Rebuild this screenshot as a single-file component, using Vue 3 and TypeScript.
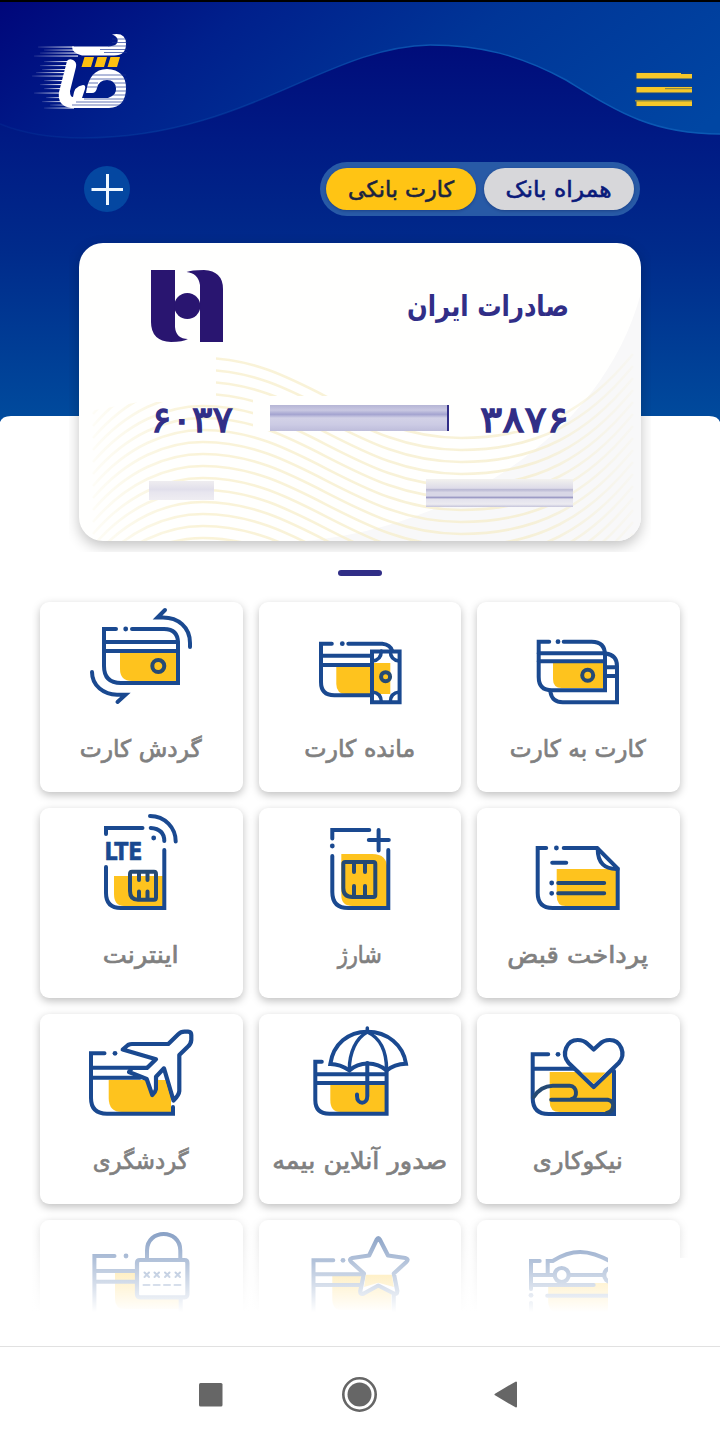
<script setup lang="ts">
type Shape = [kind: string, d: string]
interface Tile {
  id: string
  label: string
  width: number
  x: number
  y: number
  lte?: boolean
  shapes: Shape[]
}

const tiles: Tile[] = [
  {
    id: 'turnover', label: 'گردش کارت', width: 122, x: 40, y: 602,
    shapes: [
      ['gold', 'M120 653H177V681H132Q120 681 120 669Z'],
      ['line', 'M116 629H104V666Q104 683 121 683H178V643Q178 629 164 629H132'],
      ['dot', 'M125.7 629h0'],
      ['line', 'M104 642H178M104 651H178'],
      ['dark', 'M164.300 666a6 6 0 1 0-12 0a6 6 0 1 0 12 0'],
      ['line', 'M190 647V643C190 627 178 617.500 163 617.500H157.500L165 610'],
      ['line', 'M92 672C92 686 104 694.500 117 694.700H125.500L117.500 702'],
    ],
  },
  {
    id: 'balance', label: 'مانده کارت', width: 111, x: 258.7, y: 602,
    shapes: [
      ['gold', 'M336 667H371V663H390V694H346Q336 694 336 684Z'],
      ['line', 'M331.500 643.700H320.700V682Q320.700 695.300 334 695.300H371'],
      ['line', 'M348 643.700H382Q390 644.500 392 651'],
      ['dot', 'M342 643.700h0'],
      ['line', 'M320.700 655.700H371M320.700 665H371'],
      ['line', 'M371.700 651.500H399.300V702.300H371.700Z'],
      ['thin', 'M381 651Q381 660 372 661M390 651Q390 660 399 661M381 702Q381 693 372 692M390 702Q390 693 399 692'],
      ['dark', 'M389.800 676.700a4.500 4.500 0 1 0-9 0a4.500 4.500 0 1 0 9 0'],
    ],
  },
  {
    id: 'transfer', label: 'کارت به کارت', width: 136, x: 477.3, y: 602,
    shapes: [
      ['gold', 'M553.300 663H604V688H562Q553.300 688 553.300 679Z'],
      ['line', 'M549.500 641.700H539V677Q539 690.300 552 690.300H605.300V655Q605.300 641.700 592 641.700H564'],
      ['dot', 'M558.300 641.700h0'],
      ['line', 'M539 653.300H605M539 661.300H605'],
      ['dark', 'M593.500 675.300a5.500 5.500 0 1 0-11 0a5.500 5.500 0 1 0 11 0'],
      ['line', 'M606 653.500Q617.300 655 617.300 666V702.300H563Q552.500 702.300 550.700 692M606 667.300H617M606 676H617'],
    ],
  },
  {
    id: 'internet', label: 'اینترنت', width: 76, x: 40, y: 808, lte: true,
    shapes: [
      ['gold', 'M114 876H163V906H124Q114 906 114 894Z'],
      ['line', 'M106 834V828H142.500M106 867V893Q106 908 121 908H164.300V850'],
      ['line', 'M150.700 828Q164.300 829 164.300 841M150 816C165 816 175.700 828 175.700 841.500'],
      ['dot', 'M153.700 838h0'],
      ['dark', 'M132 871.700H154Q156 871.700 156 874V897.500Q156 899.700 154 899.700H138Q130 899.700 130 891V874Q130 871.700 132 871.700Z'],
      ['dark', 'M139 872V880M147.500 872V880M139 891.500V899M147.500 891.500V899'],
    ],
  },
  {
    id: 'charge', label: 'شارژ', width: 44, x: 258.7, y: 808,
    shapes: [
      ['gold', 'M341 854H372Q387 854 387 869V906H352Q341 906 341 895Z'],
      ['line', 'M332 838.500V830H369M332 856V892Q332 908 348 908H388V850'],
      ['dot', 'M332 846h0'],
      ['line', 'M368.500 840H388.500M378.300 830V850.500'],
      ['dark', 'M345 862H373Q375 862 375 864V895Q375 897 373 897H352Q343 897 343 888V864Q343 862 345 862Z'],
      ['dark', 'M353.700 863V872M364.700 863V872M353.700 886V896M364.700 886V896'],
    ],
  },
  {
    id: 'bill', label: 'پرداخت قبض', width: 141, x: 477.3, y: 808,
    shapes: [
      ['gold', 'M557 869H617V906H566Q557 906 557 896Z'],
      ['line', 'M546.500 848H538V893Q538 908 553 908H618V868.500L597.500 848H564'],
      ['line', 'M598 849C598 863 605 869.500 618 869'],
      ['dot', 'M556.700 848h0M552 883h0M552 893.300h0'],
      ['line', 'M552.500 862.700H566.500'],
      ['dark', 'M558.500 883H604.500M558.500 893.300H604.500'],
    ],
  },
  {
    id: 'travel', label: 'گردشگری', width: 96, x: 40, y: 1014,
    shapes: [
      ['gold', 'M108.700 1080H171V1112H122Q108.700 1112 108.700 1098Z'],
      ['line', 'M104.500 1053.300H91V1098Q91 1113.700 107 1113.700H173V1107M91 1067.700H147M91 1077.700H140'],
      ['dot', 'M115 1053.300h0'],
      ['paper', 'M168.300 1044L178 1034.500Q181 1031.500 185 1031.700H188Q191.300 1032 191.300 1035V1040Q191 1044 187.500 1047L179.300 1055V1091Q179 1095 173.500 1100.500L164 1068.300L156 1076.700V1089Q155.500 1092 152.300 1095L146.700 1079L129 1072L132 1068H147L156 1059.300L122.700 1049.500L128 1045Q130 1044 132 1044Z'],
      ['goldfill', 'M158 1080H165L171 1101L170 1104H158Z'],
    ],
  },
  {
    id: 'insurance', label: 'صدور آنلاین بیمه', width: 175, x: 258.7, y: 1014,
    shapes: [
      ['gold', 'M330 1085H385V1112H340Q330 1112 330 1100Z'],
      ['line', 'M321.500 1061.700H315V1100Q315 1113.700 329 1113.700H386.300V1070M315 1074.300H386M315 1083H386'],
      ['line', 'M330 1064C333 1044 348 1031.700 367 1031.700C387 1031.700 403 1045 405.700 1063.700Q394 1064 386.300 1070.500C376 1061 359 1061 349 1070.500Q340 1064 330 1064Z'],
      ['thin', 'M349 1070C349 1052 356 1038 367 1032C380 1038 386.300 1052 386.300 1070M367 1028V1032'],
      ['line', 'M367 1063V1096C367 1105 356.700 1105 356.700 1096V1094.500'],
    ],
  },
  {
    id: 'charity', label: 'نیکوکاری', width: 90, x: 477.3, y: 1014,
    shapes: [
      ['gold', 'M550 1072H613V1112H560Q550 1112 550 1102Z'],
      ['line', 'M548.500 1054.300H533V1098Q533 1114 549 1114H614.300V1071M533 1068.700H574'],
      ['dot', 'M558.300 1054.300h0'],
      ['goldpaper', 'M594 1087L569 1063C561 1054 567 1040 578 1040Q584 1040 588 1044L594 1049.500L600 1044Q604 1040 610 1040C621 1040 627 1054 619 1063Z'],
      ['goldfill', 'M582 1072.500H606L594 1084Z'],
      ['dark', 'M534 1097Q541 1086 553 1085.700H570C578 1086 578 1098 572 1099'],
      ['dark', 'M551.500 1099.700H608Q614 1101 613.500 1106Q613 1112 607 1113'],
    ],
  },
  {
    id: 'password', label: '', width: 0, x: 40, y: 1220,
    shapes: [
      ['gold', 'M115 1272.700H179V1309H125Q115 1309 115 1299Z'],
      ['line', 'M114.500 1256H94.400V1315M94.400 1271H136M94.400 1281.700H136M180.700 1299V1315'],
      ['dot', 'M126 1256h0'],
      ['line', 'M147 1259V1250.500C147 1228.500 180.300 1228.500 180.300 1250.500V1259'],
      ['paper', 'M140 1260H184.400Q187.400 1260 187.400 1263V1294.300Q187.400 1297.300 184.400 1297.300H140Q137 1297.300 137 1294.300V1263Q137 1260 140 1260Z'],
      ['fine', 'M144.500 1272.500l4.500 4.500m0-4.500l-4.500 4.500M154.500 1272.500l4.500 4.500m0-4.500l-4.500 4.500M165 1272.500l4.500 4.500m0-4.500l-4.500 4.500M175.500 1272.500l4.500 4.500m0-4.500l-4.500 4.500'],
      ['fine', 'M143.500 1285h6M153.700 1285h6M164 1285h6M174.500 1285h6'],
    ],
  },
  {
    id: 'favorite', label: '', width: 0, x: 258.7, y: 1220,
    shapes: [
      ['gold', 'M332 1274.700H391V1310H342Q332 1310 332 1300Z'],
      ['line', 'M333 1260.300H313.200V1315M313.200 1274.300H362M313.200 1285H362M393.500 1293V1315'],
      ['dot', 'M342.700 1260.300h0'],
      ['goldpaper', 'M376.500 1239.500Q378 1236.500 379.500 1239.500L387.700 1255.500L405 1258Q409 1259 406 1262L393.500 1273.500L397 1291Q397 1295 393.500 1293.500L378 1285.500L363.500 1293.500Q359.500 1295 360 1291L363.700 1273.500L351 1262Q348 1259 352 1258L368.800 1255.500Z'],
      ['goldfill', 'M365.500 1274.700H391.500L393.500 1287L378 1282.800L363.800 1287Z'],
    ],
  },
  {
    id: 'vehicle', label: '', width: 0, x: 477.3, y: 1220,
    shapes: [
      ['gold', 'M548.500 1287H594V1283H615V1315H558Q548.500 1310 548.500 1302Z'],
      ['line', 'M540 1261H531.300V1289M531.300 1303V1315M531.300 1275H554M570 1275H603M531.300 1285H594M547.500 1295.700H610'],
      ['dot', 'M531.300 1295.300h0'],
      ['line', 'M548 1274V1261H553Q567 1252 580.500 1252Q594 1252 612 1262'],
      ['paper', 'M569 1275a7 7 0 1 0-14 0a7 7 0 1 0 14 0M618.500 1275a7 7 0 1 0-14 0a7 7 0 1 0 14 0'],
    ],
  },
]

const waves: string[] = Array.from({ length: 18 }, (_, i) => {
  const p = 115 + i * 12
  return `M14 ${p + 56}C48 ${p + 16} 88 ${p} 124 ${p}C222 ${p} 276 ${p + 80} 382 ${p + 80}C460 ${p + 80} 510 ${p + 50} 554 ${p - 4}`
})

const speedLines = [
  [38, 46.5, 36], [44, 49.500, 32], [40, 52.500, 38], [34, 55.500, 44], [44, 61, 24], [40, 65, 28], [42, 69, 24],
  [36, 72, 28], [32, 75.500, 32], [44, 80, 18], [40, 84, 22], [44, 88, 18], [34, 92.500, 28], [46, 97, 18],
  [42, 101, 24], [50, 104.500, 24], [44, 107.500, 30],
]
</script>

<template>
  <div class="screen">
    <svg class="backdrop" width="720" height="424" viewBox="0 0 720 424" aria-hidden="true">
      <defs>
        <linearGradient id="base" x1="0" y1="0" x2="0" y2="1">
          <stop offset="0.1" stop-color="#000c7a" />
          <stop offset="0.33" stop-color="#001a84" />
          <stop offset="0.6" stop-color="#002b8b" />
          <stop offset="1" stop-color="#004b9d" />
        </linearGradient>
        <linearGradient id="swell" gradientUnits="userSpaceOnUse" x1="0" y1="0" x2="330" y2="420">
          <stop offset="0" stop-color="#00067a" />
          <stop offset="0.3" stop-color="#00208c" />
          <stop offset="0.6" stop-color="#003597" />
          <stop offset="1" stop-color="#0046a3" />
        </linearGradient>
        <linearGradient id="edge" gradientUnits="userSpaceOnUse" x1="0" y1="0" x2="720" y2="0">
          <stop offset="0" stop-color="#0b54b0" stop-opacity="0.15" />
          <stop offset="0.35" stop-color="#0b54b0" stop-opacity="0.4" />
          <stop offset="0.6" stop-color="#0b54b0" />
          <stop offset="1" stop-color="#0b5ab4" />
        </linearGradient>
      </defs>
      <path fill="url(#base)" d="M0 0H720V422Q718 416 709 416H11Q2 416 0 422Z" />
      <path fill="url(#swell)" d="M0 0H720V134C650 134 615 110 566 80C520 55 480 45 430 45C325 47 245 138 83 138C50 138 22 133 0 124Z" />
      <path fill="none" stroke="url(#edge)" stroke-width="1.5" d="M720 134C650 134 615 110 566 80C520 55 480 45 430 45C325 47 245 138 83 138C50 138 22 133 0 124" />
      <path fill="#000" d="M0 0H720V2H0Z" />
    </svg>

    <header class="topbar">
      <svg class="logo" width="100" height="84" viewBox="30 30 100 84">
        <defs>
          <linearGradient id="streak" x1="0" y1="0" x2="1" y2="0">
            <stop offset="0" stop-color="#fff" stop-opacity="0.1" />
            <stop offset="1" stop-color="#fff" />
          </linearGradient>
        </defs>
        <rect v-for="(s, i) in speedLines" :key="i" :x="s[0]" :y="s[1]" :width="s[2]" height="1.1" fill="url(#streak)" />
        <path fill="#fff" d="M72 46.500H108Q119 46 117.500 39Q116 35.500 112 34.500Q126 32 126 44Q126 55.500 114 55.500H82Q72 53 72 46.500Z" />
        <path fill="#fff" fill-rule="evenodd" d="M67 61Q69 58 73 60Q77 62 76 67L70 91Q70 97 73 97Q74 86 83 85Q86 85 85 89L82 98H108Q117 95 116 88Q115 80 107 80Q99 80 97 88Q96 93 92 93H86Q89 69 107 69Q126 70 126 88Q126 107 109 108H71Q57 106 59 92Z" />
        <path class="cuts" d="M100 49.500H127M104 52.500H127M108 46H127M112 42.500H127M112 39H127M92 75H126M90 79H127M88 83H98M114 83H127M87 87H97M116 87H127M115 91H127M113 95H127M84 99H126M76 102H124M72 105H120" />
        <path fill="#fdc010" d="M84.500 57H94L91 67H81.500ZM97.500 57H107L104 67H94.500ZM110.500 57H120L117 67H107.500Z" />
      </svg>
      <svg class="menu" width="58" height="38" viewBox="0 0 58 38">
        <path fill="#184680" d="M0 1H57V9H0ZM0 15H57V23H0ZM0 28H57V36H0Z" opacity=".6" />
        <path fill="#f7c829" d="M1.500 2H46V3H57V7.500H1.500ZM1.500 16H57V21.500H1.500ZM1.500 30H57V35H1.500Z" />
        <path fill="#8d8b45" d="M30 17H57V18.200H30ZM0 29H57V30.500H0Z" />
      </svg>
    </header>

    <div class="switch-row">
      <button class="add" aria-label="add">
        <svg width="46" height="46" viewBox="0 0 46 46"><path d="M7.500 23.500H39M23.500 8V39" stroke="#eef7ff" stroke-width="3" /></svg>
      </button>
      <div class="switch">
        <div class="pill active">
          <svg width="150" height="42"><text x="75" y="29" text-anchor="middle" textLength="106" lengthAdjust="spacingAndGlyphs">کارت بانکی</text></svg>
        </div>
        <div class="pill">
          <svg width="150" height="42"><text x="74.500" y="29" text-anchor="middle" textLength="106" lengthAdjust="spacingAndGlyphs">همراه بانک</text></svg>
        </div>
      </div>
    </div>

    <section class="card">
      <svg class="card-art" width="562" height="298" viewBox="0 0 562 298" aria-hidden="true">
        <defs>
          <clipPath id="wave-area"><path d="M137 100H562V298H0V170L60 159H137Z" /></clipPath>
          <linearGradient id="fade" gradientUnits="userSpaceOnUse" x1="10" y1="0" x2="556" y2="0">
            <stop offset="0" stop-color="#f3ebc2" stop-opacity="0.1" />
            <stop offset="0.2" stop-color="#f8efcb" stop-opacity="0.75" />
            <stop offset="0.8" stop-color="#f5edcb" stop-opacity="0.75" />
            <stop offset="1" stop-color="#f3ebc2" stop-opacity="0.1" />
          </linearGradient>
        </defs>
        <path fill="#f8f8f9" d="M562 50C535 150 455 225 350 268Q290 292 226 298H562Z" />
        <g clip-path="url(#wave-area)">
          <path v-for="(w, i) in waves" :key="i" :d="w" fill="none" stroke="url(#fade)" stroke-width="2.6" />
        </g>
        <path fill="#fffffe" d="M174 153H400V188H174ZM400 120H520L470 188H400Z" />
      </svg>
      <div class="card-head">
        <svg width="72" height="72" viewBox="0 0 72 72">
          <g fill="#291570">
            <path d="M0 0H24V57Q25 69 37 69Q32 72 20 72Q0 71 0 52Z" />
            <path d="M72 72H49V15Q47 3 35.500 2Q40 0 53 0Q72 1 72 19Z" />
            <circle cx="36.300" cy="36" r="13" />
          </g>
        </svg>
        <svg class="bank" width="200" height="72"><text x="19" y="46" textLength="162" lengthAdjust="spacingAndGlyphs">صادرات ایران</text></svg>
      </div>
      <div class="number">
        <svg width="82" height="44"><text x="0" y="36" textLength="82" lengthAdjust="spacingAndGlyphs">۶۰۳۷</text></svg>
        <span class="smear wide"></span>
        <svg class="last" width="89" height="44"><text x="0" y="36" textLength="89" lengthAdjust="spacingAndGlyphs">۳۸۷۶</text></svg>
      </div>
      <div class="meta">
        <span class="smear small"></span>
        <span class="smear name"></span>
      </div>
    </section>

    <div class="pager"></div>

    <main class="grid">
      <div v-for="t in tiles" :key="t.id" class="tile">
        <svg class="icon" width="203" height="110" :viewBox="`${t.x} ${t.y} 203 110`">
          <path v-for="(s, i) in t.shapes" :key="i" :class="s[0]" :d="s[1]" />
          <text v-if="t.lte" class="lte" x="104.500" y="859.500" textLength="38" lengthAdjust="spacingAndGlyphs">LTE</text>
        </svg>
        <svg v-if="t.label" class="label" width="203" height="80">
          <text x="100.700" y="44.500" text-anchor="middle" :textLength="t.width" lengthAdjust="spacingAndGlyphs">{{ t.label }}</text>
        </svg>
      </div>
      <div class="veil"></div>
      <div class="patch"></div>
    </main>

    <nav class="system">
      <svg width="24" height="24"><rect width="23.500" height="23.500" rx="1.500" fill="#666" /></svg>
      <svg width="36" height="36"><circle cx="18.500" cy="17.500" r="16.200" fill="none" stroke="#666" stroke-width="2.600" /><circle cx="18.500" cy="17.500" r="12" fill="#666" /></svg>
      <svg width="24" height="28"><path d="M1.500 13.500L22 1.500V25.500Z" fill="#666" stroke="#666" stroke-width="2" stroke-linejoin="round" /></svg>
    </nav>
  </div>
</template>

<style>
html, body { margin: 0; background: #fff; }
</style>

<style scoped>
.screen {
  position: relative;
  display: flex;
  flex-direction: column;
  width: 720px;
  height: 1442px;
  overflow: hidden;
  background: #fff;
  font-family: "DejaVu Sans", sans-serif;
}
svg { display: block; flex: none; overflow: visible; }
svg text { font-family: "DejaVu Sans", sans-serif; }
.backdrop { position: absolute; top: 0; left: 0; }
.topbar {
  position: relative;
  display: flex;
  justify-content: space-between;
  height: 162px;
  padding: 0 27px 0 30px;
  box-sizing: border-box;
}
.logo { margin-top: 30px; }
.cuts { fill: none; stroke: #1a3394; stroke-width: .9; opacity: .75; }
.menu { margin-top: 71px; }
.switch-row {
  position: relative;
  display: flex;
  align-items: center;
  justify-content: space-between;
  height: 54px;
  padding: 0 80px 0 84px;
}
.add {
  width: 46px;
  height: 46px;
  padding: 0;
  border: 0;
  border-radius: 50%;
  background: #0447a1;
}
.switch {
  display: flex;
  gap: 8px;
  padding: 6px;
  border-radius: 27px;
  background: #285aa6;
}
.pill {
  width: 150px;
  height: 42px;
  border-radius: 21px;
  background: #d7d7da;
  box-shadow: 0 1px 3px rgba(0, 20, 80, .35);
}
.pill text { font-size: 22px; fill: #0a1a7a; stroke: #0a1a7a; stroke-width: .6; }
.active { background: #ffc414; }
.active text { fill: #1b2440; stroke: #1b2440; }
.card {
  position: relative;
  width: 562px;
  height: 298px;
  margin: 27px 0 0 79px;
  border-radius: 24px;
  background: #fffffe;
  box-shadow: 0 5px 14px rgba(0, 0, 0, .24);
  clip-path: inset(-10px -10px -11px -10px);
}
.card-art { position: absolute; inset: 0; border-radius: 24px; overflow: hidden; }
.card-head {
  position: relative;
  display: flex;
  justify-content: space-between;
  height: 72px;
  padding: 27px 53px 0 72px;
}
.bank text { font-size: 29px; font-weight: 700; fill: #312e87; }
.number {
  position: relative;
  display: flex;
  align-items: center;
  margin-top: 54px;
  padding: 0 72px;
}
.number text { font-size: 36px; fill: #312e87; stroke: #312e87; stroke-width: 1.3; }
.last { margin-left: auto; }
.smear { display: block; }
.wide {
  width: 177px;
  height: 26px;
  margin-left: 37px;
  border-right: 2px solid #312e87;
  background: linear-gradient(#b5b5d5, #c9c8e2 20%, #a4a4d0 36%, #d3d2e7 50%, #cccbe4 75%, #bebddb);
}
.meta {
  position: relative;
  display: flex;
  justify-content: space-between;
  align-items: center;
  margin-top: 39px;
  padding: 0 68px 0 70px;
}
.small { width: 65px; height: 19px; margin-bottom: 6px; background: linear-gradient(#efedf0, #e1dfeb 45%, #e8e6ef 60%, #efedf2); }
.name {
  width: 147px;
  height: 28px;
  background: linear-gradient(#f3f2ef, #dddbe8 33%, #b9b8d3 38%, #d8d7e6 48%, #d8d7e6 60%, #9c9bc5 66%, #e3e2ed 72%, #ecebf1 90%, #c4c3da);
}
.pager { flex: none; width: 44px; height: 6px; margin: 29px auto 0; border-radius: 3px; background: #312e87; }
.grid {
  position: relative;
  flex: none;
  display: grid;
  grid-template-columns: repeat(3, minmax(0, 1fr));
  grid-auto-rows: 190px;
  gap: 16px;
  width: 640px;
  height: 712px;
  margin: 26px 40px 0;
  clip-path: inset(-8px -8px 0 -8px);
}
.tile {
  border-radius: 9px;
  background: #fff;
  box-shadow: 0 3px 9px rgba(0, 0, 0, .25);
}
.icon path { fill: none; stroke: #1a4990; stroke-width: 4; stroke-linecap: round; }
.icon .gold, .icon .goldfill { fill: #fec31e; stroke: none; }
.icon .dark { stroke: #254a74; }
.icon .thin { stroke-width: 3.5; }
.icon .fine { stroke-width: 2; }
.icon .dot { stroke-width: 4.8; }
.icon .paper, .icon .goldpaper { fill: #fff; stroke-width: 4.2; stroke-linejoin: round; }
.lte { font-size: 24px; font-weight: 700; fill: #1a4990; stroke: #1a4990; stroke-width: .6; stroke-linejoin: round; }
.label text { font-size: 24px; fill: #808080; stroke: #808080; stroke-width: .7; }
.veil {
  position: absolute;
  left: -8px;
  right: -8px;
  top: 618px;
  height: 94px;
  background: linear-gradient(rgba(255, 255, 255, .4), #fff 98%);
}
.patch { position: absolute; left: 568px; right: -8px; top: 656px; height: 56px; background: #fff; }
.system {
  display: flex;
  align-items: center;
  justify-content: space-between;
  box-sizing: border-box;
  height: 96px;
  margin-top: auto;
  padding: 0 202px 0 199px;
  border-top: 1px solid #e1e1e1;
}
</style>
